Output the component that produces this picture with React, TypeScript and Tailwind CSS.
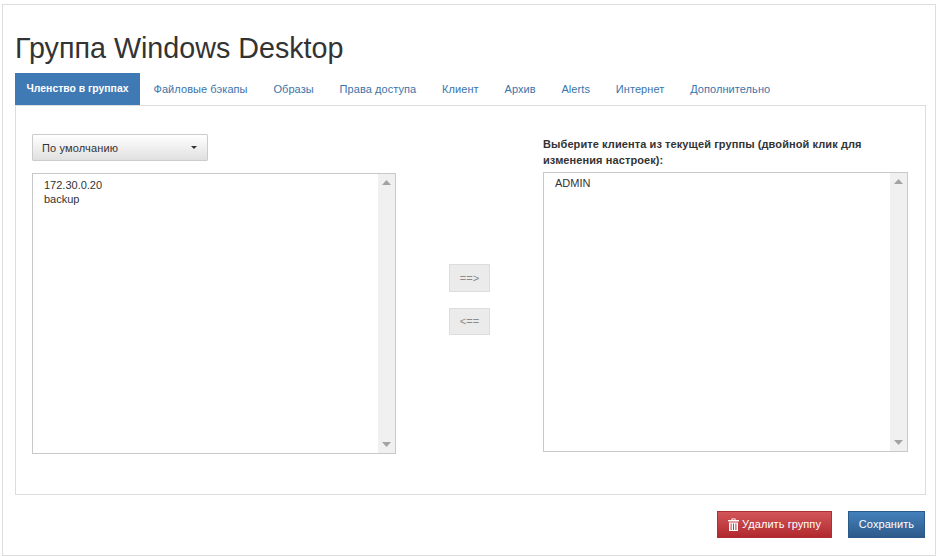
const tabs = ["Файловые бэкапы", "Образы", "Права доступа", "Клиент", "Архив", "Alerts", "Интернет", "Дополнительно"];

function ListBox({ items, top }: { items: string[]; top: string }) {
  return (
    <div className="flex min-h-0 flex-1 border border-[#c8c8c8]">
      <div className={`flex-1 pl-[11px] text-[11px] leading-[14px] text-[#333] ${top}`}>
        {items.map((item) => (
          <div key={item}>{item}</div>
        ))}
      </div>
      <div className="flex w-[17px] flex-col items-center justify-between bg-[#f0f0f0] py-[6px]">
        <svg width="9" height="5" viewBox="0 0 9 5"><path d="M4.5 0 9 5H0z" fill="#a3a3a3" /></svg>
        <svg width="9" height="5" viewBox="0 0 9 5"><path d="M0 0h9L4.5 5z" fill="#a3a3a3" /></svg>
      </div>
    </div>
  );
}

function TrashIcon() {
  return (
    <svg width="11" height="13" viewBox="0 0 11 13" fill="white">
      <path d="M3.5 2V.5h4V2H11v1.5H0V2zM4.5 1.2V2h2v-.8z" fillRule="evenodd" />
      <path d="M1 4.5h9V13H1zM2.6 5.5v6.5h1V5.500zM5 5.500v6.500h1V5.500zM7.400 5.500v6.500h1V5.500z" fillRule="evenodd" />
    </svg>
  );
}

export default function App() {
  return (
    <div className="h-[556px] w-[939px] overflow-hidden bg-white pl-[2px] pt-[4px] font-['Liberation_Sans',Arial,sans-serif]">
      <div className="flex h-[552px] w-[934px] flex-col border border-[#dddddd] pl-[12px] pr-[9px]">
        <h1 className="mt-[23px] mb-[1px] h-[44px] text-[28.7px] leading-[40px] font-normal text-[#333]">Группа Windows Desktop</h1>
        <div className="flex h-[32px] text-[11px] tracking-[0.07px] text-[#3a74ab]">
          <div className="flex w-[125px] items-center justify-center bg-[#3f7ab5] text-[10.4px] font-bold tracking-normal text-white">Членство в группах</div>
          <div className="flex items-center gap-[25.8px] pl-[13.5px]">
            {tabs.map((tab) => (
              <span key={tab}>{tab}</span>
            ))}
          </div>
        </div>
        <div className="flex h-[390px] border border-[#dddddd] px-[16px]">
          <div className="flex w-[364px] flex-col pb-[40px] pt-[28px]">
            <div className="mb-[12px] flex h-[27px] w-[176px] items-center justify-between rounded-[1px] border border-[#cccccc] bg-gradient-to-b from-white to-[#e0e0e0] pl-[9px] pr-[10px] text-[11px] tracking-[0.15px] text-[#333]">
              <span className="pt-[2px]">По умолчанию</span>
              <span className="h-0 w-0 border-x-[3px] border-t-[3px] border-x-transparent border-t-[#333]" />
            </div>
            <ListBox items={["172.30.0.20", "backup"]} top="pt-[4px]" />
          </div>
          <div className="flex w-[147px] flex-col items-center gap-[16px] pt-[158px]">
            <button className="h-[28px] w-[41px] border border-[#dddddd] bg-[#ebebeb] text-[11px] text-[#8a8a8a]">==&gt;</button>
            <button className="h-[27px] w-[41px] border border-[#dddddd] bg-[#ebebeb] text-[11px] text-[#8a8a8a]">&lt;==</button>
          </div>
          <div className="flex w-[365px] flex-col pb-[42px] pt-[30px]">
            <div className="mb-[4px] text-[11px] font-bold leading-[16px] tracking-[0.09px] text-[#333]">
              Выберите клиента из текущей группы (двойной клик для изменения настроек):
            </div>
            <ListBox items={["ADMIN"]} top="pt-[3px]" />
          </div>
        </div>
        <div className="mt-[16px] flex justify-end gap-[16px] pr-[1px] text-[11px] tracking-[0.07px] text-white">
          <button className="flex h-[27px] w-[115px] items-center justify-center gap-[3px] border border-[#ac3036] bg-gradient-to-b from-[#d2555a] to-[#b1282d]">
            <TrashIcon />
            <span>Удалить группу</span>
          </button>
          <button className="h-[27px] w-[77px] border border-[#2b5a8a] bg-gradient-to-b from-[#4480bb] to-[#2d5b8b]">Сохранить</button>
        </div>
      </div>
    </div>
  );
}
